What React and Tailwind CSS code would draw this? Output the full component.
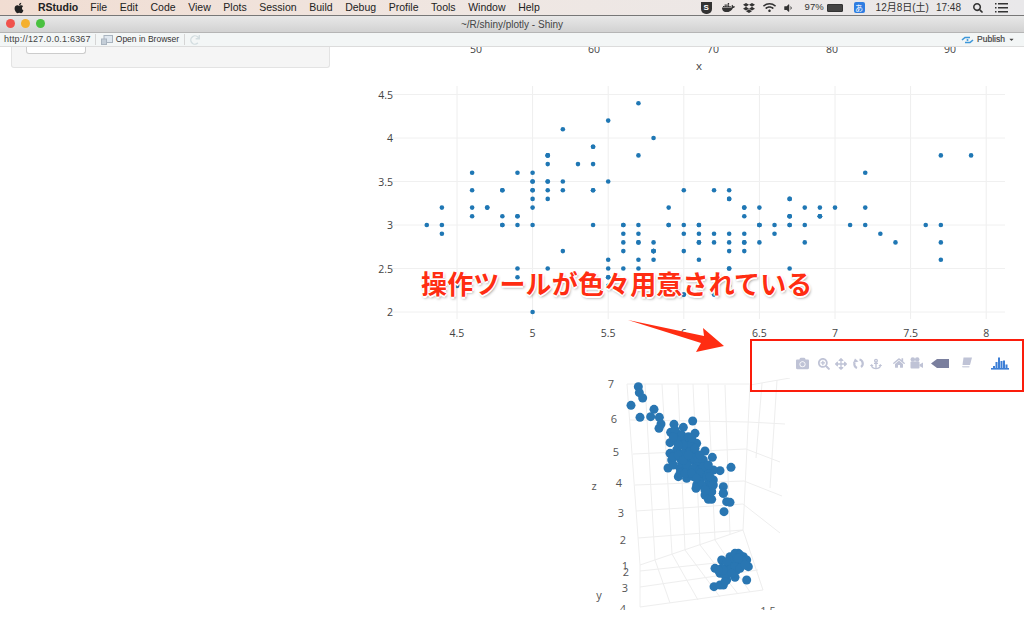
import React from 'react'
import { FaApple, FaDocker, FaDropbox, FaWifi, FaVolumeDown, FaCamera, FaSearchPlus, FaArrowsAlt, FaAnchor, FaHome, FaSearch, FaCaretDown, FaRedo } from 'react-icons/fa'

const menus = ['File', 'Edit', 'Code', 'View', 'Plots', 'Session', 'Build', 'Debug', 'Profile', 'Tools', 'Window', 'Help']

const iris = [
  [5.1,3.5],[4.9,3],[4.7,3.2],[4.6,3.1],[5,3.6],[5.4,3.9],[4.6,3.4],[5,3.4],[4.4,2.9],[4.9,3.1],
  [5.4,3.7],[4.8,3.4],[4.8,3],[4.3,3],[5.8,4],[5.7,4.4],[5.4,3.9],[5.1,3.5],[5.7,3.8],[5.1,3.8],
  [5.4,3.4],[5.1,3.7],[4.6,3.6],[5.1,3.3],[4.8,3.4],[5,3],[5,3.4],[5.2,3.5],[5.2,3.4],[4.7,3.2],
  [4.8,3.1],[5.4,3.4],[5.2,4.1],[5.5,4.2],[4.9,3.1],[5,3.2],[5.5,3.5],[4.9,3.6],[4.4,3],[5.1,3.4],
  [5,3.5],[4.5,2.3],[4.4,3.2],[5,3.5],[5.1,3.8],[4.8,3],[5.1,3.8],[4.6,3.2],[5.3,3.7],[5,3.3],
  [7,3.2],[6.4,3.2],[6.9,3.1],[5.5,2.3],[6.5,2.8],[5.7,2.8],[6.3,3.3],[4.9,2.4],[6.6,2.9],[5.2,2.7],
  [5,2],[5.9,3],[6,2.2],[6.1,2.9],[5.6,2.9],[6.7,3.1],[5.6,3],[5.8,2.7],[6.2,2.2],[5.6,2.5],
  [5.9,3.2],[6.1,2.8],[6.3,2.5],[6.1,2.8],[6.4,2.9],[6.6,3],[6.8,2.8],[6.7,3],[6,2.9],[5.7,2.6],
  [5.5,2.4],[5.5,2.4],[5.8,2.7],[6,2.7],[5.4,3],[6,3.4],[6.7,3.1],[6.3,2.3],[5.6,3],[5.5,2.5],
  [5.5,2.6],[6.1,3],[5.8,2.6],[5,2.3],[5.6,2.7],[5.7,3],[5.7,2.9],[6.2,2.9],[5.1,2.5],[5.7,2.8],
  [6.3,3.3],[5.8,2.7],[7.1,3],[6.3,2.9],[6.5,3],[7.6,3],[4.9,2.5],[7.3,2.9],[6.7,2.5],[7.2,3.6],
  [6.5,3.2],[6.4,2.7],[6.8,3],[5.7,2.5],[5.8,2.8],[6.4,3.2],[6.5,3],[7.7,3.8],[7.7,2.6],[6,2.2],
  [6.9,3.2],[5.6,2.8],[7.7,2.8],[6.3,2.7],[6.7,3.3],[7.2,3.2],[6.2,2.8],[6.1,3],[6.4,2.8],[7.2,3],
  [7.4,2.8],[7.9,3.8],[6.4,2.8],[6.3,2.8],[6.1,2.6],[7.7,3],[6.3,3.4],[6.4,3.1],[6,3],[6.9,3.1],
  [6.7,3.1],[6.9,3.1],[5.8,2.7],[6.8,3.2],[6.7,3.3],[6.7,3],[6.3,2.5],[6.5,3],[6.2,3.4],[5.9,3],
]

const upperCluster = [
  [175,50],[178,68],[188,84],[153,106],[180,142],[222,118],[212,140],[238,142],[243,162],[237,175],
  [338,153],[282,163],[310,172],[345,190],[272,187],[290,190],[300,205],[270,218],[350,220],[320,215],
  [375,243],[397,262],[270,250],[290,240],[275,270],[264,294],[320,240],[345,250],[300,265],[330,270],
  [350,280],[295,320],[320,325],[300,295],[350,345],[370,320],[385,340],[420,302],[453,292],[400,300],
  [430,350],[430,370],[390,385],[350,300],[380,300],[320,300],[395,345],[375,355],[330,225],[310,250],
  [285,180],[305,195],[325,200],[280,285],[305,280],[340,320],[360,335],[395,365],[400,330],[370,270],
  [290,210],[310,225],[330,245],[340,265],[320,285],[340,295],[360,300],[370,290],[360,310],[380,320],
  [390,320],[400,345],[375,375],[385,375],[300,310],[315,310],[335,310],[350,325],[365,345],[280,260],
  [295,255],[310,270],[325,255],[345,235],[335,205],[295,225],[280,200],[355,265],[385,285],[360,255],
]

const lowerCluster = [
  [385,28],[395,28],[430,10],[440,35],[450,37],[432,65],[395,5],[375,0],[348,-5],
  [425,210],[405,235],[420,250],[450,200],[475,190],[490,200],[505,230],[500,270],[465,262],[440,270],
  [430,285],[402,290],[420,285],[460,220],[440,240],[480,220],[500,210],[470,240],[455,210],[445,225],[425,235],
  [465,190],[480,195],[495,215],[470,205],[485,210],[440,215],[450,240],[465,230],[480,235],[495,225],
  [435,255],[430,240],[415,240],[455,250],[475,205],[435,275],
]

const xTicks = [4.5, 5, 5.5, 6, 6.5, 7, 7.5, 8]
const yTicks = [2, 2.5, 3, 3.5, 4, 4.5]
const topTicks = [[146, '50'], [264, '60'], [383, '70'], [502, '80'], [620, '90']]

const zLabels = [[281, 6, '7'], [284, 41, '6'], [286, 74, '5'], [289, 105, '4'], [291, 135, '3'], [293, 162, '2'], [295, 188, '1'], [296, 194, '2'], [295, 210, '3'], [293, 231, '4']]

const gridLines = [
  // back wall
  'M297 6H420', 'M300 42L418 44', 'M303 76L416 71', 'M305 107L414 103', 'M306 133L413 126', 'M308 160L413 152',
  'M297 6L310 187L310 229', 'M420 7L413 152',
  'M315 6L325 182', 'M332 6L342 176', 'M348 6L355 172', 'M363 6L370 167', 'M378 6L385 162', 'M395 7L400 156',
  // floor
  'M310 187L413 152L433 212L310 229', 'M310 193L395 184', 'M310 209L428 192',
  'M325 182L340 225', 'M342 176L368 222', 'M355 172L390 219', 'M370 167L408 216', 'M385 162L420 214',
  // right wall
  'M420 7L460 0', 'M418 44L455 46', 'M416 71L450 84', 'M414 103L452 118', 'M413 126L450 155',
  'M432 5L426 80', 'M447 2L440 110',
]

function ScatterPlot () {
  const px = x => 127 + (x - 4.5) * 151.2
  const py = y => 265 - (y - 2) * 87
  return (
    <svg width="694" height="293" className="block" fontFamily="'Open Sans', sans-serif">
      {topTicks.map(([x, label]) => (
        <text key={x} x={x} y="6" textAnchor="middle" fontSize="10.5" fill="#444">{label}</text>
      ))}
      <text x="369" y="23" textAnchor="middle" fontSize="11.5" fill="#444">x</text>
      {xTicks.map(t => (
        <line key={t} x1={px(t)} x2={px(t)} y1="39" y2="272" stroke="#eee" />
      ))}
      {yTicks.map(t => (
        <line key={t} x1="60" x2="675" y1={py(t)} y2={py(t)} stroke="#f0f0f0" />
      ))}
      {yTicks.map(t => (
        <text key={t} x="63" y={py(t) + 4} textAnchor="end" fontSize="10.5" fill="#444">{t}</text>
      ))}
      {xTicks.map(t => (
        <text key={t} x={px(t)} y="290" textAnchor="middle" fontSize="10.5" fill="#444">{t}</text>
      ))}
      {iris.map(([x, y], i) => (
        <circle key={i} cx={px(x)} cy={py(y)} r="2.3" fill="#1f77b4" />
      ))}
    </svg>
  )
}

function OrbitIcon () {
  return (
    <svg width="13" height="13" viewBox="0 0 13 13" fill="none" stroke="currentColor">
      <path d="M7.5 2.5A4.2 4.2 0 0 1 9 10" strokeWidth="2.2" />
      <path d="M5 11A4.2 4.2 0 0 1 2.6 5.5" strokeWidth="2.2" />
      <path d="M1 6L3 1.5L6.5 4.5z" fill="currentColor" stroke="none" />
    </svg>
  )
}

function MovieCameraIcon () {
  return (
    <svg width="13" height="12" viewBox="0 0 13 12" fill="currentColor">
      <circle cx="2.8" cy="2.5" r="2.3" />
      <circle cx="7.2" cy="2.5" r="2.3" />
      <rect x="0.5" y="4.5" width="9" height="7" rx="1" />
      <path d="M9.5 7.5L13 5.5V11L9.5 9z" />
    </svg>
  )
}

function HoverTagIcon () {
  return (
    <svg width="18" height="11" viewBox="0 0 18 11" className="text-[#7a7f9e]">
      <path d="M0 5.5L6 1H18V10H6z" fill="currentColor" />
    </svg>
  )
}

function BookIcon () {
  return (
    <svg width="11" height="11" viewBox="0 0 11 11" fill="currentColor">
      <path d="M2.5 0.5H11L9 8H1.5z" />
      <path d="M1 9H8.5L8.2 10.5H1.5z" opacity="0.7" />
    </svg>
  )
}

function PlotlyLogo () {
  return (
    <svg width="18" height="13" viewBox="0 0 18 13" fill="#3d7fd6">
      <rect x="0" y="11" width="18" height="1.6" />
      <rect x="2" y="9" width="2" height="2" />
      <rect x="4.5" y="5" width="2" height="6" />
      <rect x="7" y="0.5" width="2" height="10.5" />
      <rect x="9.5" y="4" width="2" height="7" />
      <rect x="12" y="3.5" width="2" height="7.5" />
      <rect x="14.5" y="7.5" width="2" height="3.5" />
    </svg>
  )
}

function ModeBar () {
  return (
    <div className="h-[38px] flex items-start pt-[17px] text-[#bfc3d6]">
      <div className="w-[479px] flex justify-end">
        <FaCamera size={13} />
      </div>
      <div className="ml-[9px] flex items-center gap-[5px]">
        <FaSearchPlus size={12} />
        <FaArrowsAlt size={12} />
        <OrbitIcon />
        <FaAnchor size={12} />
      </div>
      <div className="ml-[11px] flex items-center gap-[5px]">
        <FaHome size={12} />
        <MovieCameraIcon />
      </div>
      <div className="ml-[8px] mt-[1px]"><HoverTagIcon /></div>
      <div className="ml-[12px]"><BookIcon /></div>
      <div className="ml-[19px]"><PlotlyLogo /></div>
    </div>
  )
}

function Scatter3d () {
  return (
    <svg width="694" height="232" className="block" fontFamily="'Open Sans', sans-serif">
      {gridLines.map(d => (
        <path key={d} d={d} fill="none" stroke="#eee" />
      ))}
      {zLabels.map(([x, y, label]) => (
        <text key={x + '-' + y} x={x} y={y + 4} textAnchor="middle" fontSize="11" fill="#555">{label}</text>
      ))}
      <text x="264" y="112" textAnchor="middle" fontSize="11" fill="#555">z</text>
      <text x="269" y="221" textAnchor="middle" fontSize="11" fill="#555">y</text>
      <text x="438" y="237" textAnchor="middle" fontSize="11" fill="#555">1.5</text>
      <g fill="#2976b2">
        {upperCluster.map(([x, y], i) => (
          <circle key={i} cx={250 + x / 3} cy={-8 + y / 3} r="4.5" />
        ))}
        {lowerCluster.map(([x, y], i) => (
          <circle key={i} cx={250 + x / 3} cy={112 + y / 3} r="4.5" />
        ))}
      </g>
    </svg>
  )
}

function MenuBar () {
  return (
    <div className="h-[15px] shrink-0 flex items-center bg-gradient-to-r from-[#f1ddd2] via-[#efe7e3] to-[#e9e8ea] text-[10.5px] text-[#222] font-['Liberation_Sans',sans-serif]">
      <FaApple size={12} className="ml-[13px] text-[#222]" />
      <span className="ml-[13px] font-bold">RStudio</span>
      <div className="ml-[12px] flex gap-[12.6px]">
        {menus.map(m => <span key={m}>{m}</span>)}
      </div>
      <div className="ml-auto flex items-center text-[#333]">
        <span className="w-[11px] h-[12px] rounded-b-[5px] bg-[#333] text-white text-[8px] font-bold flex items-center justify-center">S</span>
        <FaDocker size={13} className="ml-[10px]" />
        <FaDropbox size={12} className="ml-[8px]" />
        <FaWifi size={13} className="ml-[8px]" />
        <FaVolumeDown size={10} className="ml-[7px]" />
        <span className="ml-[12px] text-[9.5px]">97%</span>
        <span className="ml-[3px] w-[16px] h-[8px] border border-[#333] bg-[#444] rounded-[1px]"></span>
        <span className="ml-[11px] w-[11px] h-[11px] rounded-[2px] bg-[#2f7de1] text-white text-[8px] flex items-center justify-center font-['Noto_Sans_CJK_JP',sans-serif]">あ</span>
        <span className="ml-[11px] text-[10px] font-['Liberation_Sans','Noto_Sans_CJK_JP',sans-serif]">12月8日(土)</span>
        <span className="ml-[7px] text-[10px]">17:48</span>
        <FaSearch size={10} className="ml-[12px]" />
        <svg width="13" height="10" viewBox="0 0 13 10" fill="#333" className="ml-[12px] mr-[16px]">
          <rect x="0" y="0" width="1.5" height="1.5" />
          <rect x="3" y="0" width="10" height="1.5" />
          <rect x="0" y="4" width="1.5" height="1.5" />
          <rect x="3" y="4" width="10" height="1.5" />
          <rect x="0" y="8" width="1.5" height="1.5" />
          <rect x="3" y="8" width="10" height="1.5" />
        </svg>
      </div>
    </div>
  )
}

function TitleBar () {
  return (
    <div className="h-[18px] shrink-0 relative flex items-center justify-center border-t border-t-[#777] border-b border-b-[#b5b5b5] bg-gradient-to-b from-[#e8e8e8] to-[#d2d2d2] font-['Liberation_Sans',sans-serif]">
      <div className="absolute left-[6px] top-[3px] flex gap-[6px]">
        <span className="w-[9px] h-[9px] rounded-full bg-[#f0524c]"></span>
        <span className="w-[9px] h-[9px] rounded-full bg-[#f4b02f]"></span>
        <span className="w-[9px] h-[9px] rounded-full bg-[#49c13f]"></span>
      </div>
      <span className="text-[10px] text-[#444]">~/R/shiny/plotly - Shiny</span>
    </div>
  )
}

function AddressBar () {
  return (
    <div className="h-[14px] shrink-0 flex items-center bg-[#f3f6f6] border-b border-b-[#dcdcdc] text-[8.5px] text-[#333] font-['Liberation_Sans',sans-serif]">
      <span className="ml-[4px] text-[9px] tracking-[0.2px] text-[#444]">http://127.0.0.1:6367</span>
      <span className="ml-[4px] w-px h-[11px] bg-[#d5d5d5]"></span>
      <svg width="12" height="10" viewBox="0 0 12 10" className="ml-[5px]">
        <rect x="3" y="0.5" width="8.5" height="7" fill="#dfe7ef" stroke="#a9b4bf" />
        <rect x="0.5" y="4" width="5" height="5.5" fill="#c4ced8" stroke="#a9b4bf" />
      </svg>
      <span className="ml-[3px]">Open in Browser</span>
      <span className="ml-[5px] w-px h-[11px] bg-[#d5d5d5]"></span>
      <FaRedo size={10} className="ml-[5px] text-[#d3dde0]" />
      <svg width="13" height="10" viewBox="0 0 13 10" fill="none" stroke="#3d97d9" strokeWidth="1.6" className="ml-auto">
        <path d="M1 5L4 2.5H9M12 5L9 7.5H4" />
        <circle cx="6.5" cy="5" r="1" fill="#3d97d9" stroke="none" />
      </svg>
      <span className="ml-[3px] text-[#444] [-webkit-text-stroke:0.2px_#444]">Publish</span>
      <FaCaretDown size={7} className="ml-[3px] mr-[9px] text-[#444]" />
    </div>
  )
}

export default function App () {
  return (
    <div className="relative w-[1024px] h-[639px] overflow-hidden flex flex-col bg-white">
      <MenuBar />
      <TitleBar />
      <AddressBar />

      <div className="flex-1 flex items-start min-h-0">
        <div className="w-[330px] shrink-0">
          <div className="ml-[11px] w-[319px] h-[21px] rounded-b-[3px] border border-t-0 border-[#e3e3e3] bg-[#f5f5f5]">
            <div className="ml-[14px] w-[60px] h-[7px] rounded-b-[3px] border border-t-0 border-[#ccc] bg-white"></div>
          </div>
        </div>
        <div className="w-[694px] shrink-0">
          <ScatterPlot />
          <ModeBar />
          <Scatter3d />
        </div>
      </div>

      <div className="absolute left-[421px] top-[266px] text-[26px] leading-[34px] font-bold tracking-[0.15px] text-[#ff2d12] whitespace-nowrap font-['Noto_Sans_CJK_JP',sans-serif] [text-shadow:1.5px_0_0_#fff,-1.5px_0_0_#fff,0_1.5px_0_#fff,0_-1.5px_0_#fff,1px_2px_3px_rgba(0,0,0,0.45)]">
        操作ツールが色々用意されている
      </div>
      <svg width="110" height="40" className="absolute left-[622px] top-[316px]">
        <path d="M6 4L82 20L81 12L102 30L74 36L79 27z" fill="#ff2d12" />
      </svg>
      <div className="absolute left-[750px] top-[339px] w-[274px] h-[53px] border-[2.5px] border-[#fb1d0c]"></div>
    </div>
  )
}
